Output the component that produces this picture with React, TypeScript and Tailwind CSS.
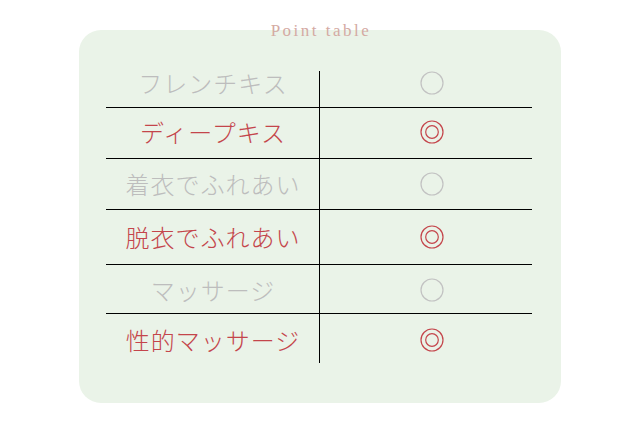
import React from "react";

type Row = { label: string; hot: boolean; cls: string; pad: string };

const rows: Row[] = [
  { label: "フレンチキス", hot: false, cls: "h-[36px]", pad: "pb-[12px]" },
  { label: "ディープキス", hot: true, cls: "h-[51px] border-t border-black", pad: "pb-[3px]" },
  { label: "着衣でふれあい", hot: false, cls: "h-[51px] border-t border-black", pad: "pb-0" },
  { label: "脱衣でふれあい", hot: true, cls: "h-[55px] border-t border-black", pad: "pb-0" },
  { label: "マッサージ", hot: false, cls: "h-[49px] border-t border-black", pad: "pt-[1px]" },
  { label: "性的マッサージ", hot: true, cls: "h-[50px] border-t border-black", pad: "pt-[3px]" },
];

function Mark({ hot }: { hot: boolean }) {
  return (
    <svg width="24" height="24" viewBox="0 0 24 24" className="block">
      <circle cx="12" cy="12" r="11" fill="none" stroke={hot ? "#c4454b" : "#c2c2c2"} strokeWidth="1.2" />
      {hot && <circle cx="12" cy="12" r="6.3" fill="none" stroke="#c4454b" strokeWidth="1.2" />}
    </svg>
  );
}

export default function App() {
  return (
    <div className="w-[640px] h-[432px] bg-white flex flex-col items-center">
      <div
        className="relative z-10 mt-[20px] h-[22px] leading-[22px] text-[17px] tracking-[2.5px] pl-[2px] text-[#d4aaa3]"
        style={{ fontFamily: '"Liberation Serif", serif' }}
      >
        Point table
      </div>
      <div className="mt-[-12px] w-[482px] h-[373px] rounded-[22px] bg-[#eaf3e8] pt-[41px] pl-[27px]">
        <div className="w-[426px] flex flex-col" style={{ fontFamily: '"Noto Sans CJK JP", sans-serif' }}>
          {rows.map((r) => (
            <div key={r.label} className={"flex " + r.cls}>
              <div
                className={
                  "w-[214px] border-r border-black flex items-center justify-center text-[24px] font-light tracking-[1px] pl-[1px] leading-none " +
                  r.pad +
                  " " +
                  (r.hot ? "text-[#c4454b]" : "text-[#bdbdbd]")
                }
              >
                {r.label}
              </div>
              <div className={"flex-1 flex items-center justify-center pl-[12px] " + r.pad}>
                <Mark hot={r.hot} />
              </div>
            </div>
          ))}
        </div>
      </div>
    </div>
  );
}
